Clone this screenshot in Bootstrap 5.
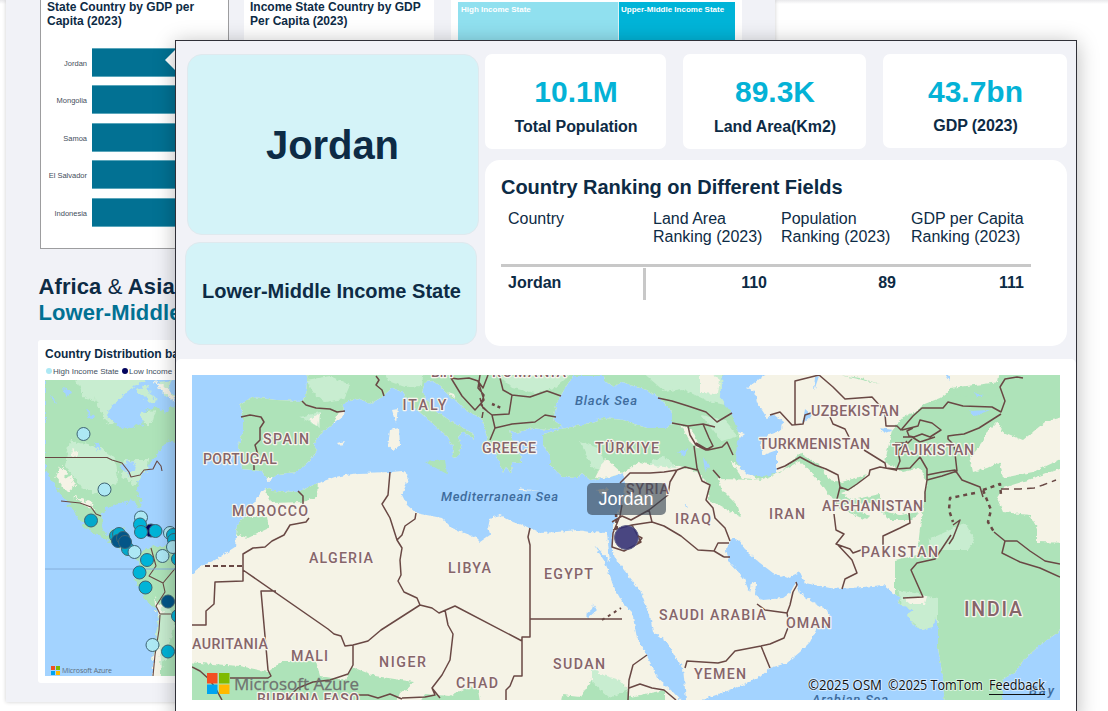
<!DOCTYPE html>
<html lang="en">
<head>
<meta charset="utf-8">
<meta name="viewport" content="width=device-width, initial-scale=1">
<title>Country dashboard</title>
<link href="https://cdn.jsdelivr.net/npm/bootstrap@5.3.0/dist/css/bootstrap.min.css" rel="stylesheet">
<style>
:root{--ink:#0d2b45;--page:#f1f2f7;--teal:#04b2d6;--deep:#027193}
body{font-family:"Liberation Sans",Arial,sans-serif;color:var(--ink);width:1108px;height:711px;background:#fff}
.report{width:769px;height:702px;margin-left:6px;background:var(--page);box-shadow:0 0 4px rgba(0,0,0,.2);padding-left:32px}
.gutter{width:1108px;height:711px;overflow:hidden;background:linear-gradient(#e9e9eb,transparent 4px) no-repeat,#fff}
.top-row{height:249px}
.bar-card{width:189px;height:249px;border:1px solid #9d9d9f;border-top:0;margin-left:2px;background:#fff}
.card-title-sm{font-size:12px;line-height:14px;font-weight:700}
.bar-card .card-title-sm{padding:0 0 0 6px;height:48px}
.bar-row{height:37.4px}
.bar-label{width:46px;font-size:7.5px;line-height:31px;height:29px;text-align:right;color:#3f4d5b}
.bar-fill{height:29px;margin-left:5px;background:var(--deep);border-top:1px solid #5aa6bb;border-bottom:1px solid #5aa6bb;flex:1}
.second-card{width:190px;height:249px;background:#fff;margin-left:15px;padding-left:6px}
.tree-card{width:291px;height:249px;background:#fff;margin-left:17px;padding:2px 7px 0 7px;font-size:8px;line-height:12px;font-weight:700;color:#fff}
.tree-a{width:160px;height:80px;background:#90e0ef;padding:2px 3px}
.tree-b{width:117px;height:80px;background:#00b4d8;border-left:1px solid #d7f3f8;padding:2px 2px;white-space:nowrap}
.headline{font-size:22px;line-height:26px;font-weight:700;margin-top:25px;height:66px;padding-left:.5px;letter-spacing:.1px}
.headline .amp{font-weight:400}.headline div+div{color:var(--deep)}
.dist-card{width:700px;height:343px;background:#fff;border-radius:3px;padding:7px 7px}
.legend-row{font-size:8px;line-height:12px;height:13px;margin-top:5px;color:#3f5061;margin-bottom:1px}
.key{display:inline-block;width:6px;height:6px;border-radius:50%;margin:0 1px}
.tip{left:175px;top:40px;width:902px;height:680px;background:var(--page);border:1px solid #303038;box-shadow:0 3px 20px rgba(0,0,0,.28)}
.tip-arrow{left:165px;top:50px;width:10px;height:20px;background:#fff;clip-path:polygon(0 50%,100% 0,100% 100%)}
.upper{height:318px;padding:13px 8px 0 9px}
.left-col{width:294px}
.country-tile{width:292px;height:181px;margin-left:1.5px;background:#d4f3f8;border:1px solid #dfe9ee;border-radius:15px;font-size:40px;font-weight:700;letter-spacing:-.1px}
.income-tile{width:292px;height:103px;margin-top:7px;background:#d4f3f8;border:1px solid #dfe9ee;border-radius:15px;font-size:20px;font-weight:700;padding:0 0 6px 1px}
.right-col{width:582px;margin-left:6px}
.kpi{height:95px;background:#fff;border-radius:7px;text-align:center;font-weight:700}
.kpi .val{font-size:30px;line-height:36px;color:var(--teal);padding:20px 0 0 1px}
.kpi .lbl{font-size:16px;line-height:18px;margin-top:8px;letter-spacing:-.07px;padding-left:1px}
.kpi:last-child{height:94px}.kpi:last-child .lbl{margin-top:7px}
.rank-card{height:186px;margin-top:11px;background:#fff;border-radius:15px;padding:16px 16px}
.rank-card h2{font-size:20px;line-height:22px;font-weight:700;margin:0;letter-spacing:-.02px}
.rank{width:530px;margin-top:11px;font-size:16px;line-height:18px;table-layout:fixed}
.rank th{font-weight:400;vertical-align:top;height:56px;padding:1px 0 0 7px;border-bottom:3px solid #c8c8c8;white-space:nowrap}
.rank th:last-child{padding-left:8px}
.rank td{font-weight:700;text-align:right;height:34px;padding:1px 7px 0 0}
.rank td:first-child{text-align:left;padding-left:7px;position:relative}
.rank td:first-child::after{content:"";position:absolute;right:0;top:1px;width:3px;height:32px;background:#c8c8c8}
.map-sec{background:#fff;padding:16px 16px;height:360px;border-radius:5px 5px 0 0}
svg{display:block}
.bd{fill:none;stroke:#694844;stroke-width:1.5;stroke-linejoin:round}
.thin .bd{stroke-width:1.1}
.cn{font-family:Roboto,sans-serif;font-size:14.2px;font-weight:500;fill:#86656a;stroke:#f8f5ed;stroke-width:2.4;paint-order:stroke;stroke-linejoin:round}
.sea{font-family:Roboto,sans-serif;font-size:13px;font-style:italic;fill:#3e6c9d;font-weight:500}
.att{font-family:"Open Sans","Noto Sans",sans-serif;font-size:14px;fill:#111;stroke:#fff;stroke-opacity:.55;stroke-width:2;paint-order:stroke}
</style>
</head>
<body class="overflow-hidden position-relative">
<div class="gutter">
<main class="report">
  <div class="top-row d-flex">
    <section class="bar-card">
      <div class="card-title-sm">State Country by GDP per<br>Capita (2023)</div>
      <div class="bar-row d-flex"><div class="bar-label">Jordan</div><div class="bar-fill"></div></div>
      <div class="bar-row d-flex"><div class="bar-label">Mongolia</div><div class="bar-fill"></div></div>
      <div class="bar-row d-flex"><div class="bar-label">Samoa</div><div class="bar-fill"></div></div>
      <div class="bar-row d-flex"><div class="bar-label">El Salvador</div><div class="bar-fill"></div></div>
      <div class="bar-row d-flex"><div class="bar-label">Indonesia</div><div class="bar-fill"></div></div>
    </section>
    <section class="second-card"><div class="card-title-sm">Income State Country by GDP<br>Per Capita (2023)</div></section>
    <section class="tree-card d-flex"><div class="tree-a">High Income State</div><div class="tree-b">Upper-Middle Income State</div></section>
  </div>
  <div class="headline"><div>Africa <span class="amp">&amp;</span> Asia</div><div>Lower-Middle</div></div>
  <section class="dist-card">
    <div class="card-title-sm">Country Distribution based on Income</div>
    <div class="legend-row"><span class="key" style="background:#ade8f4"></span>High Income State <span class="key" style="background:#03045e"></span>Low Income State</div>
    <svg class="thin" width="400" height="296" viewBox="45 380 400 296">
      <defs>
        <filter id="rough" x="-5%" y="-5%" width="110%" height="110%"><feTurbulence type="fractalNoise" baseFrequency=".2" numOctaves="3" seed="4" result="n"/><feDisplacementMap in="SourceGraphic" in2="n" scale="8" xChannelSelector="R" yChannelSelector="G"/></filter>
        <clipPath id="am"><path d="M45 376H182V428L172 437 162 447 155 456 148 467 140 479 137 490 141 503 139 509 134 499 126 503 112 505 102 513 101 527 106 535 115 530 125 528 120 538 123 548 131 552 141 552 150 548 160 545 182 550V680H152L154 650 158 620 157 611 147 601 139 589 134 580 137 570 141 560 128 556 114 543 100 537 89 530 80 521 70 505 62 495 57 487 50 478 45 470Z"/></clipPath>
      </defs>
      <rect x="45" y="380" width="400" height="296" fill="#a3d3ff"/>
      <g filter="url(#rough)"><g clip-path="url(#am)">
        <rect x="40" y="370" width="150" height="310" fill="#aee3b9"/>
        <path d="M75 376H150L155 395 145 402 130 395 120 412 108 425 95 400 85 398ZM70 440L100 448 116 460 118 482 100 495 82 488 65 465ZM125 460L150 460 145 478 135 486 122 475ZM150 620L165 600 175 620 165 660 158 676Z" fill="#c8edd0"/>
        <path d="M60 466L67 472 65 478 72 476 75 486 68 492 62 486 56 478ZM72 496L90 502 96 511 84 506ZM152 656L160 645 162 676H151ZM154 598L163 610 158 618ZM71 448L78 452 74 458Z" fill="#f5f3e6"/>
        <path d="M121 466L131 460 138 468 128 476ZM64 388L72 392 66 396ZM87 410L94 416 88 419ZM50 395L57 402 51 400ZM94 440L101 446 99 452Z" fill="#a3d3ff"/>
      </g>
      <path d="M107 414L114 403 128 391 140 383 155 376H180V408L170 407 163 421 147 432 139 424 130 428 118 427Z" fill="#a3d3ff"/>
      <path d="M143 411L156 407 170 416 180 418V445L168 440 152 442 142 428Z" fill="#aee3b9"/>
      <path d="M140 412L156 410 152 424 144 424Z" fill="#c8edd0"/>
      <path d="M143 388L155 379 180 378 177 403 163 400 156 393Z" fill="#a3d3ff"/><path d="M122 378L138 378 132 390ZM136 390L148 384 150 395 158 400 148 402ZM160 382L172 380 168 390 175 396 165 398Z" fill="#c8edd0"/><path d="M154 380L170 390 175 402 162 392Z" fill="#f5f3e6"/>
      <path d="M133 520L148 522 156 528 145 526Z" fill="#aee3b9"/></g>
      <path class="bd" d="M45 457.500H107L112 460 122 463 129 472 131 477 140 475 144 470 153 469 157 461 161 466 162 471M61 501L80 503 91 507 96 514 101 516M151 548L156 566 149 576 163 583 178 565M163 583L165 592 156 606 160 614 171 614M160 615L159 630 155 655 153 676"/>
      <path d="M45 569H300" stroke="#84aedb" fill="none"/>
      <g stroke="#3f6575" stroke-width="1">
        <g fill="#ade8f4"><circle cx="83.500" cy="434" r="6.500"/><circle cx="104.500" cy="489.500" r="6.500"/></g>
        <g fill="#03a9cb"><circle cx="91" cy="520.500" r="6.500"/><circle cx="116" cy="536" r="6.500"/><circle cx="119" cy="534" r="6.500"/><circle cx="128" cy="549" r="6.500"/></g>
        <g fill="#035688"><circle cx="118" cy="541" r="6.500"/><circle cx="123" cy="538" r="6.500"/><circle cx="125" cy="542" r="6.500"/><circle cx="168" cy="601.500" r="6.500"/></g>
        <circle cx="141" cy="517.500" r="6.500" fill="#ade8f4"/><circle cx="151" cy="530.500" r="6.500" fill="#03045e"/>
        <g fill="#00b4d8"><circle cx="140" cy="524.500" r="6.500"/><circle cx="141" cy="532" r="6.500"/><circle cx="155.500" cy="531" r="6.500"/><circle cx="147" cy="560" r="6.500"/><circle cx="139.500" cy="572.500" r="6.500"/><circle cx="145.500" cy="587.500" r="6.500"/><circle cx="168" cy="651.500" r="6.500"/><circle cx="178" cy="559" r="6.500"/><circle cx="178" cy="616" r="6.500"/></g>
        <g fill="#ade8f4"><circle cx="134.500" cy="552" r="6.500"/><circle cx="162.500" cy="556" r="6.500"/><circle cx="152.500" cy="645" r="6.500"/><circle cx="170" cy="533" r="6.500"/></g>
        <g fill="#00b4d8"><circle cx="173" cy="535" r="6.500"/><circle cx="174" cy="540" r="6.500"/></g><circle cx="173" cy="547" r="6.500" fill="#ade8f4"/>
      </g>
      <path d="M51 666h4v4h-4z" fill="#f25022"/><path d="M56 666h4v4h-4z" fill="#7fba00"/><path d="M51 671h4v4h-4z" fill="#00a4ef"/><path d="M56 671h4v4h-4z" fill="#ffb900"/>
      <text x="62" y="673" font-family="Open Sans,sans-serif" font-size="7" fill="#5c6d7c" textLength="50">Microsoft Azure</text>
    </svg>
  </section>
</main>
</div>

<div class="tip-arrow position-absolute"></div>
<aside class="tip position-absolute">
  <div class="upper d-flex">
    <div class="left-col">
      <div class="country-tile d-flex align-items-center justify-content-center">Jordan</div>
      <div class="income-tile d-flex align-items-center justify-content-center">Lower-Middle Income State</div>
    </div>
    <div class="right-col">
      <div class="d-flex justify-content-between">
        <div class="kpi" style="width:181px"><div class="val">10.1M</div><div class="lbl">Total Population</div></div>
        <div class="kpi" style="width:183px"><div class="val">89.3K</div><div class="lbl">Land Area(Km2)</div></div>
        <div class="kpi" style="width:184px"><div class="val">43.7bn</div><div class="lbl">GDP (2023)</div></div>
      </div>
      <div class="rank-card">
        <h2>Country Ranking on Different Fields</h2>
        <table class="rank">
          <colgroup><col style="width:145px"><col style="width:128px"><col style="width:129px"><col style="width:128px"></colgroup>
          <thead><tr><th>Country</th><th>Land Area<br>Ranking (2023)</th><th>Population<br>Ranking (2023)</th><th>GDP per Capita<br>Ranking (2023)</th></tr></thead>
          <tbody><tr><td>Jordan</td><td>110</td><td>89</td><td>111</td></tr></tbody>
        </table>
      </div>
    </div>
  </div>
  <div class="map-sec">
    <svg width="868" height="325" viewBox="192 375 868 325">
      <defs>
        <filter id="coast" x="0" y="0" width="100%" height="100%"><feTurbulence type="fractalNoise" baseFrequency=".25" numOctaves="2" seed="7" result="n"/><feDisplacementMap in="SourceGraphic" in2="n" scale="4" xChannelSelector="R" yChannelSelector="G"/></filter>
        <clipPath id="land"><path d="M308 365L306 397 302 401 276 400 252 397 240 405 243 415 243 432 238 447 241 458 242 469 262 471 268 482 278 474 297 472 310 460 317 450 313 445 322 432 343 417 344 403 358 398 370 404 382 397 392 388 402 392 415 408 432 423 448 437 453 447 452 458 457 457 462 447 458 437 463 432 474 439 472 433 452 422 432 408 422 392 425 382 433 381 442 388 455 400 468 412 482 418 485 428 487 440 497 455 503 473 506 466 511 474 512 462 522 463 520 455 513 440 510 430 516 433 522 431 533 428 547 430 557 428 562 426 553 420 557 402 567 385 573 376 604 376 605 381 613 387 623 382 630 385 647 390 660 398 672 412 672 423 667 428 647 428 623 420 603 418 583 425 560 429 543 434 543 445 550 455 550 465 563 477 577 478 582 473 590 480 610 477 623 473 625 482 622 505 613 525 612 552 620 565 640 590 650 615 653 632 667 642 675 657 683 668 687 710 702 700 730 690 760 677 770 668 787 663 800 652 810 642 817 628 823 625 830 618 827 610 813 602 800 593 796 582 790 593 783 598 763 600 755 595 756 583 752 582 750 593 743 577 730 563 726 550 732 538 738 540 748 553 760 563 773 573 787 578 800 572 805 583 830 588 842 589 883 585 893 593 900 597 898 603 913 610 907 615 913 625 922 630 932 627 935 617 938 625 938 648 943 678 945 710 1002 710 1002 680 1018 670 1020 663 1040 645 1057 633 1070 620V365Z
          M266 488L272 491 298 492 318 483 335 477 358 473 392 472 402 471 409 477 402 495 407 505 416 513 442 518 452 528 475 537 480 542 490 535 488 528 490 518 500 515 513 522 530 528 540 533 557 532 577 530 590 532 607 533 610 562 594 545 605 562 613 585 622 602 632 612 637 638 645 652 653 668 657 678 673 692 690 710H180V583L200 567 215 560 235 547 237 525 248 512 262 491Z"/></clipPath>
      </defs>
      <rect x="191" y="374" width="871" height="328" fill="#a3d3ff"/>
      <g filter="url(#coast)">
        <g clip-path="url(#land)">
          <rect x="185" y="365" width="890" height="345" fill="#f5f3e6"/>
          <path d="M185 365H725L722 395 735 418 740 440 738 462 747 475 780 473 800 453 820 465 829 480 842 482 868 474 850 490 841 493 853 500 880 494 880 500 850 506 870 516 866 520 838 508 822 484 800 461 776 474 760 480 718 479 722 490 737 505 741 517 724 508 709 500 710 485 697 472 680 466 665 463 640 468 622 476 600 482 560 482 530 480 490 482 430 480 400 440 340 410 318 455 290 478 230 478Z" fill="#aee3b9"/>
          <path d="M885 462L888 448 892 430 903 417 917 412 922 405 940 398 953 388 970 393 997 388 1000 370H1070V415L1045 422 1023 440 1003 432 997 422 987 432 983 442 970 458 973 472 987 468 1000 462 1003 478 1033 472 1070 455V465L1031 479 1003 488 997 498 1003 512 1030 515 1037 528 1037 542 1070 543V710H930L930 630 905 628 895 595 895 560 917 555 921 520 927 482 920 468 903 472Z" fill="#aee3b9"/>
          <path d="M262 485L318 480 317 497 303 502 272 503ZM243 517L267 517 269 528 248 538 232 533ZM185 662L240 666 268 672 282 661 316 661 320 676 345 680 352 667 375 676 414 682 400 693 392 710H185ZM352 668L375 678 412 682 408 690 385 694 350 690ZM595 675L625 685 630 697 665 690 665 710H560L562 695 580 697ZM425 694L450 696 470 686 478 690 480 702H420ZM880 510L900 515 920 512 912 520 890 520ZM840 375L860 378 880 384 858 379ZM950 388L1000 382 1003 395 950 396Z" fill="#aee3b9"/>
          <path d="M306 380L330 376 350 385 344 399 325 402 315 395ZM300 417L320 412 320 428ZM382 367H424L422 386 405 387 388 381ZM640 370L722 372 725 405 708 401 682 389 665 392ZM580 441L600 449 607 471 592 468ZM650 462L664 456 678 468 650 466ZM701 415L725 420 738 436 722 441ZM458 437L480 446 475 440ZM500 376L570 375 555 388 535 393 512 388ZM928 540L965 523 975 540 968 550 932 550ZM898 590L938 598 938 625 922 631 905 616Z" fill="#c8edd0"/>
          <path d="M595 478L605 458 622 473 640 462 655 466 640 482ZM700 365L720 380 718 394 700 393ZM309 420L320 413 318 427ZM681 425L693 431 700 448 691 443ZM730 460L760 480 742 478ZM903 598L927 596 925 604 910 604Z" fill="#f5f3e6"/>
          <path d="M592 665L600 674 620 680 628 690 610 698 592 682Z" fill="#c8edd0"/>
        </g>
        <path d="M724 370H772L747 388 755 392 757 402 767 418 773 414 783 422 782 430 768 435 760 445 763 455 777 450V473L763 477 747 474 736 462 737 440 745 434 738 432 732 415 720 395Z" fill="#a3d3ff"/>
        <path d="M805 409L812 415 803 423ZM815 377L819 376 814 391ZM880 428L893 430 885 433ZM969 411L990 410 975 416ZM684 504L689 508 686 507ZM703 457L709 466 705 471ZM678 452L688 449 683 457ZM593 604L597 610 588 618 585 615 592 609ZM945 374L950 375 950 381ZM975 393L984 395 977 397Z" fill="#a3d3ff"/>
        <path d="M425 462L445 460 447 474Z" fill="#aee3b9"/>
        <path d="M392 410L398 409 396 423ZM390 430L399 428 400 445 394 450 388 446ZM337 443L345 441 341 447ZM517 488L539 491 520 490ZM596 490L609 488 603 495ZM448 392L454 394 456 399Z" fill="#f5f3e6"/>
      </g>
      <g class="bd">
        <path d="M302 401L306 405 316 408 330 409 337 412 345 411M241 417L250 415 261 417 264 422 260 428 260 440 255 445 258 455 254 462 254 470M376 376L379 380 376 385 382 390 384 396M298 491L303 496 303 507M309 518L306 522 290 525 284 535 272 541 265 547 253 548 243 554 243 581 215 582 214 604 206 611 206 625H192M243 570L328 629 334 634 341 636 345 646 353 645 368 641 381 630 420 605M276 591H261L268 670 271 676 268 678H230M353 645V665L348 674 330 680 313 682 298 688 285 700M390 472L388 495 382 504 390 518 397 540 402 548 400 560 401 575 398 581 404 592 417 598 420 605 432 608 439 613 455 606 522 641M416 513L415 519 405 526 402 535 397 540M445 610L448 625 453 634 450 660 442 675 432 688 435 695 425 697 402 698M432 688L440 698M530 528L528 537 530 545V637H522V676H514L510 686 506 690 506 700M530 619H622M358 695L368 695 378 698 390 694 402 699M192 667L200 671 210 680 217 691 222 700"/>
        <path d="M451 378L458 379 469 378 478 381 484 400 475 410 462 396ZM478 381L483 388 488 375M500 378L503 390 512 395 530 397 547 391 561 396M480 375L478 388 484 395 481 405 488 412M512 395L509 414 492 415 483 408 480 398M492 415L495 428 490 440M495 428L512 424 535 422 545 415 556 417M482 418L483 412M658 398L672 401 688 406 706 412 717 422 732 413M672 423L688 426 703 424 715 427M703 424L709 438 713 446 706 450 696 445 690 435 688 426M696 443L708 450 722 447 727 442 733 455M694 446L697 468 702 481 710 485 706 500 713 508 715 518 725 528 730 541M620 483L630 473 650 473 664 472 677 470 685 467 697 470M677 470L670 482 668 495 649 510 631 520 622 516 612 522M649 510L652 522 632 525 613 530M652 522L664 526 681 536 698 550 714 551 724 557M714 551L718 543 729 543M724 557L730 557M622 505L620 516 613 533 612 547 624 551 641 542 632 525M713 470L720 478M757 604L765 610 787 613 790 605 793 592 797 585 796 582M787 613L789 625 784 638 770 644 761 646 735 651 726 661 718 663 687 661 685 668M761 646L770 668M647 655L633 665 629 680 628 700M629 688L640 684 652 688 664 690 676 700"/>
        <path d="M795 425V381L819 375 833 387 845 399 872 397 881 407 885 414 886 426 897 426 901 430 913 416 922 408 943 408 948 402 963 406 992 407 1001 412 1005 401 1000 387 1005 379 1017 377 1023 378M770 415L780 412 792 425 803 424 805 415 811 413M830 417L833 424 845 429 850 439M864 450L885 463 886 468M886 468L896 469 910 468 920 457 927 469 927 480 942 476 957 471 954 445 948 439 948 436 955 435 964 434 979 428 1001 414M896 471L900 461 898 451 907 441M902 430L918 426 920 420 932 423 941 430 930 437 922 434 914 437 909 436 907 431 913 428M903 437L912 437 920 442 935 437M895 443L908 443 912 439M777 469L785 466 800 457 815 465 826 469 838 475 840 487 848 490 857 484 869 475 870 470 880 467 896 470M840 487L836 503M834 514L836 530 844 534 836 544 850 549 853 553 864 549M909 513L910 523 900 528 883 536 883 545M838 545L852 560 857 573 845 579 842 589M927 480L925 492 925 502M927 475L942 472 955 470 962 480 980 487 983 497M953 525L960 520 953 538 949 544M951 535L935 559 917 563 911 570 923 597 903 598M994 532L1005 541 1002 553 1020 562 1040 568 1060 577M1005 541L1017 541 1030 551 1045 561 1060 564"/>
        <path d="M205 566H243" stroke-dasharray="5 3" stroke-width="2"/><path d="M983 490L1000 484 1001 495M983 490L991 510 988 522 994 532M975 493L950 498 949 510 953 522" stroke-dasharray="4 4" stroke-width="2.500"/><path d="M1001 489H1020L1034 488 1043 485 1056 480" stroke-dasharray="8 5"/>
        <path d="M602 620L610 615 621 608" stroke-dasharray="3 4" stroke-width="2"/><path d="M616 514L617 532M492 404L501 408" stroke-dasharray="3 3" stroke-width="2.500"/>
      </g>
      <g class="cn">
        <text x="402.500" y="409.500" textLength="44">ITALY</text><text x="263" y="444" textLength="46">SPAIN</text><text x="203" y="463.500" textLength="74">PORTUGAL</text><text x="232" y="515.500" textLength="76">MOROCCO</text><text x="482" y="453" textLength="54">GREECE</text><text x="595" y="453" textLength="64">TÜRKIYE</text><text x="626" y="494" textLength="43">SYRIA</text><text x="675" y="523.500" textLength="36">IRAQ</text><text x="769" y="519" textLength="36">IRAN</text><text x="811" y="415.500" textLength="88">UZBEKISTAN</text><text x="759" y="448.500" textLength="111">TURKMENISTAN</text><text x="892" y="454.500" textLength="82">TAJIKISTAN</text><text x="822" y="511" textLength="101">AFGHANISTAN</text><text x="861" y="556.500" textLength="77">PAKISTAN</text><text x="309" y="562.500" textLength="64">ALGERIA</text><text x="448" y="573" textLength="43">LIBYA</text><text x="544" y="579" textLength="49">EGYPT</text><text x="659" y="619.500" textLength="107">SAUDI ARABIA</text><text x="786" y="628" textLength="45">OMAN</text><text x="694" y="679" textLength="52">YEMEN</text><text x="553" y="668.500" textLength="52">SUDAN</text><text x="456" y="688" textLength="42">CHAD</text><text x="379" y="667" textLength="47">NIGER</text><text x="291" y="661" textLength="37">MALI</text><text x="179" y="649" textLength="89">MAURITANIA</text><text x="257" y="704" textLength="102">BURKINA FASO</text><text x="492" y="377" textLength="74">ROMANIA</text><text x="431" y="377" textLength="22">BiH</text>
        <text x="964" y="616" textLength="58" style="font-size:19.500px">INDIA</text>
      </g>
      <g class="sea"><text x="575" y="405" textLength="62">Black Sea</text><text x="441" y="501" textLength="117">Mediterranean Sea</text><text x="812" y="704" textLength="76">Arabian Sea</text><text x="1029" y="695" textLength="25">Bay</text></g>
      <circle cx="626.500" cy="537.500" r="12" fill="#312d73" fill-opacity=".88" stroke="#64668c"/>
      <path d="M638 536l4 2-4 5" class="bd"/>
      <rect x="587" y="483" width="79" height="32" rx="5" fill="#33414f" fill-opacity=".62"/>
      <text x="626" y="505" text-anchor="middle" font-family="Liberation Sans,sans-serif" font-size="18" fill="#fff" textLength="55">Jordan</text>
      <path d="M207 673h10.500v10.500H207z" fill="#f25022"/><path d="M219 673h10.500v10.500H219z" fill="#7fba00"/><path d="M207 684.500h10.500V694H207z" fill="#00a4ef"/><path d="M219 684.500h10.500V694H219z" fill="#ffb900"/>
      <text x="234" y="690" font-family="Open Sans,sans-serif" font-size="17" fill="#666" fill-opacity=".9" stroke="#737373" stroke-width=".3" textLength="125">Microsoft Azure</text>
      <g class="att"><text x="808" y="690" textLength="74" lengthAdjust="spacingAndGlyphs">©2025 OSM</text><text x="888" y="690" textLength="95" lengthAdjust="spacingAndGlyphs">©2025 TomTom</text><text x="989" y="690" textLength="56" lengthAdjust="spacingAndGlyphs">Feedback</text></g>
      <path d="M989 694.500h56" stroke="#111"/>
    </svg>
  </div>
</aside>
<script src="https://cdn.jsdelivr.net/npm/bootstrap@5.3.0/dist/js/bootstrap.bundle.min.js"></script>
</body>
</html>
